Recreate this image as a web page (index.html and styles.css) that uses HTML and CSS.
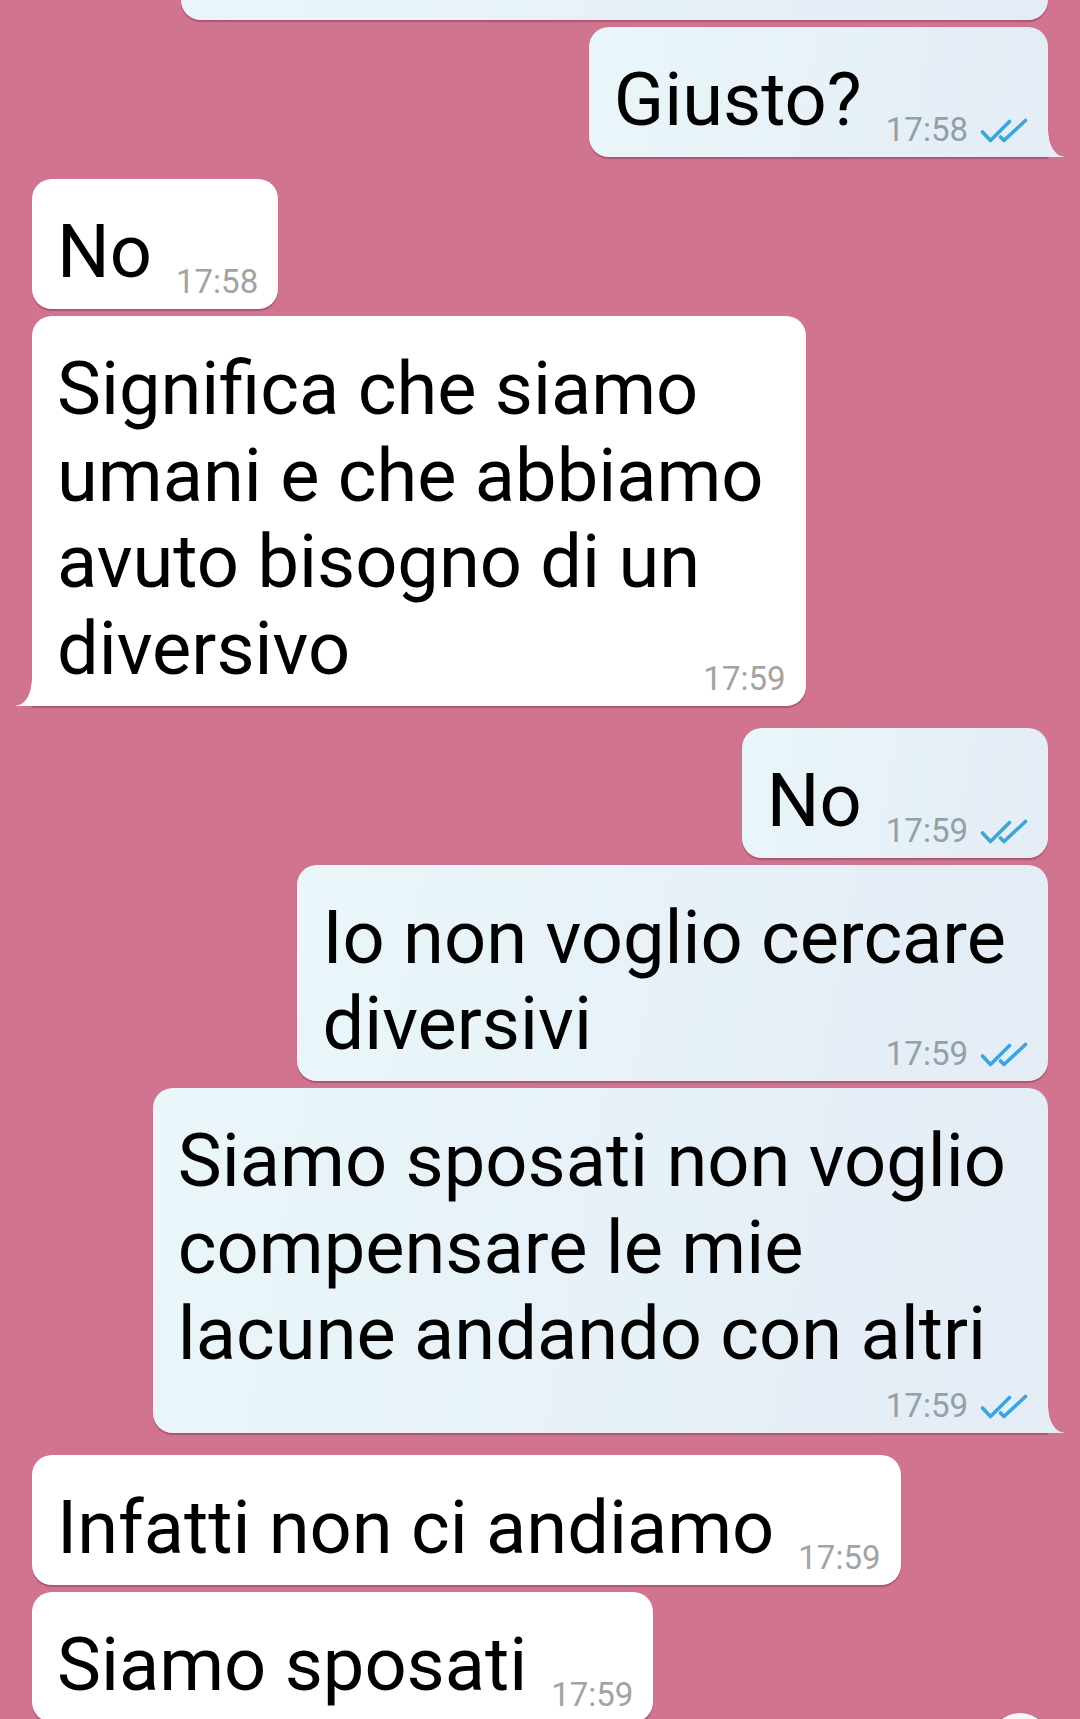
FILE: index.html
```html
<!DOCTYPE html>
<html lang="it">
<head>
<meta charset="utf-8">
<title>Chat</title>
<link rel="stylesheet" href="styles.css">
</head>
<body>
<div class="chat">
  <div class="row out">
    <div class="bubble out partial"></div>
  </div>

  <div class="row out">
    <div class="bubble out tail-out">Giusto?<span class="meta"><span class="time">17:58</span><svg class="check" viewBox="0 0 48 25"><path d="M2.5 14 L10.5 22.5 L29.5 3.5"/><path d="M20.5 19 L24 22.5 L45.5 2.5"/></svg></span></div>
  </div>

  <div class="row in switch">
    <div class="bubble in">No<span class="meta"><span class="time">17:58</span></span></div>
  </div>

  <div class="row in">
    <div class="bubble in tail-in">Significa che siamo<br>umani e che abbiamo<br>avuto bisogno di un<br>diversivo<span class="meta"><span class="time">17:59</span></span></div>
  </div>

  <div class="row out switch">
    <div class="bubble out">No<span class="meta"><span class="time">17:59</span><svg class="check" viewBox="0 0 48 25"><path d="M2.5 14 L10.5 22.5 L29.5 3.5"/><path d="M20.5 19 L24 22.5 L45.5 2.5"/></svg></span></div>
  </div>

  <div class="row out">
    <div class="bubble out">Io non voglio cercare<br>diversivi<span class="meta"><span class="time">17:59</span><svg class="check" viewBox="0 0 48 25"><path d="M2.5 14 L10.5 22.5 L29.5 3.5"/><path d="M20.5 19 L24 22.5 L45.5 2.5"/></svg></span></div>
  </div>

  <div class="row out">
    <div class="bubble out tail-out">Siamo sposati non voglio<br>compensare le mie<br>lacune andando con altri<span class="meta below"><span class="time">17:59</span><svg class="check" viewBox="0 0 48 25"><path d="M2.5 14 L10.5 22.5 L29.5 3.5"/><path d="M20.5 19 L24 22.5 L45.5 2.5"/></svg></span></div>
  </div>

  <div class="row in switch">
    <div class="bubble in">Infatti non ci andiamo<span class="meta"><span class="time">17:59</span></span></div>
  </div>

  <div class="row in">
    <div class="bubble in">Siamo sposati<span class="meta"><span class="time">17:59</span></span></div>
  </div>
</div>
<div class="fab"></div>
</body>
</html>
```

FILE: styles.css
```css
html, body {
  margin: 0;
  height: 1719px;
  overflow: hidden;
}

body {
  position: relative;
  background: #d17490;
  font-family: Roboto, "Noto Sans", "Liberation Sans", sans-serif;
}

.chat {
  display: flex;
  flex-direction: column;
  padding: 0 32px;
  margin-top: -100px;
}

.row {
  display: flex;
  margin-top: 7px;
}

.row:first-child {
  margin-top: 0;
}

.row.out {
  justify-content: flex-end;
}

.row.in {
  justify-content: flex-start;
}

.row.switch {
  margin-top: 22px;
}

.bubble {
  position: relative;
  padding: 30px 42px 9px 25px;
  border-radius: 20px;
  font-size: 74px;
  line-height: 86.5px;
  color: #000;
  box-shadow: 0 2px 1px rgba(110, 30, 60, 0.35);
}

.bubble.in {
  background: #ffffff;
}

.bubble.out {
  background: linear-gradient(100deg, #eaf6fa 0%, #e4ecf5 100%);
}

.bubble.partial {
  width: 867px;
  height: 120px;
  padding: 0;
}

.meta {
  float: right;
  margin: 55px -22px 0 24px;
  font-size: 33px;
  line-height: 36px;
  white-space: nowrap;
}

.meta.below {
  float: none;
  display: block;
  text-align: right;
  margin: 10px -22px 0 0;
}

.bubble.in .meta {
  color: #a3a3a3;
}

.bubble.out .meta {
  color: #90a1a9;
}

.check {
  width: 48px;
  height: 25px;
  margin-left: 12px;
  vertical-align: -2px;
  fill: none;
  stroke: #3ba6d7;
  stroke-width: 3.6;
  stroke-linecap: round;
  stroke-linejoin: round;
}

.tail-out {
  border-bottom-right-radius: 0;
}

.tail-out::after {
  content: "";
  position: absolute;
  right: -16px;
  bottom: 0;
  width: 16px;
  height: 26px;
  background: radial-gradient(ellipse 16px 26px at 100% 0, transparent 96%, #e5edf6 100%);
}

.tail-in {
  border-bottom-left-radius: 0;
}

.tail-in::after {
  content: "";
  position: absolute;
  left: -16px;
  bottom: 0;
  width: 16px;
  height: 26px;
  background: radial-gradient(ellipse 16px 26px at 0 0, transparent 96%, #ffffff 100%);
}

.fab {
  position: absolute;
  left: 990px;
  top: 1713px;
  width: 60px;
  height: 60px;
  border-radius: 50%;
  background: #f5f7f8;
  box-shadow: 0 1px 3px rgba(0, 0, 0, 0.3);
}
```
